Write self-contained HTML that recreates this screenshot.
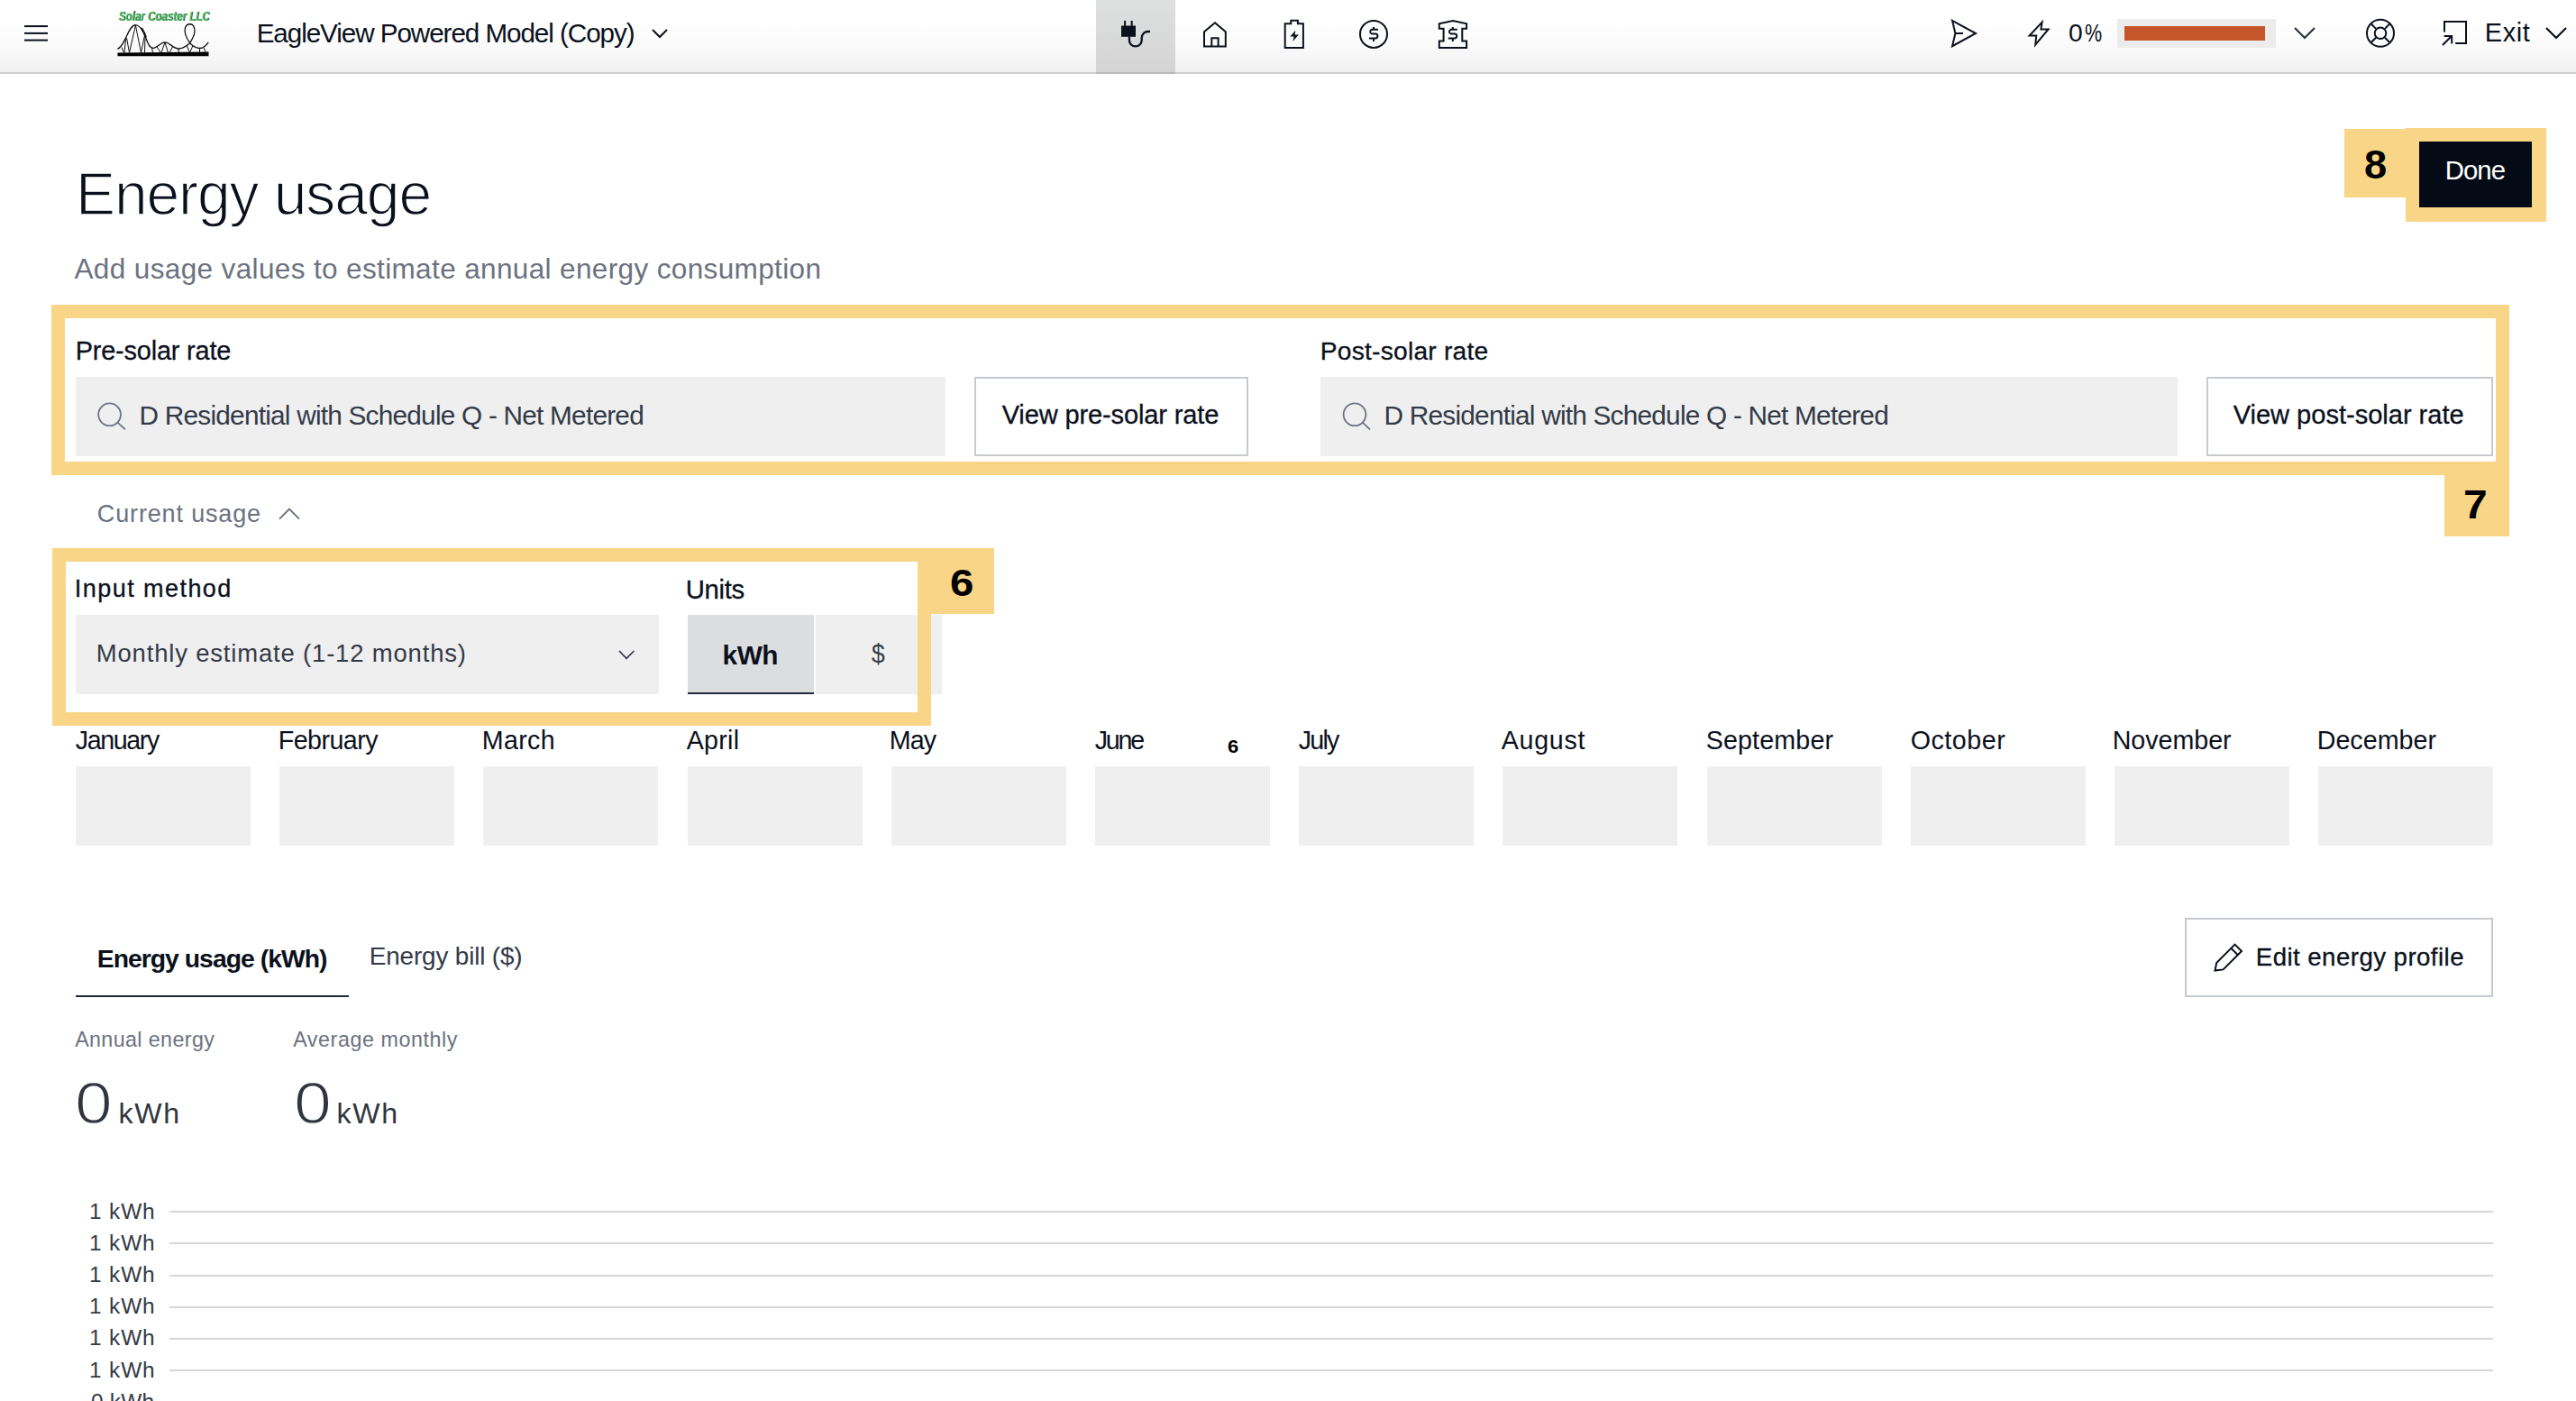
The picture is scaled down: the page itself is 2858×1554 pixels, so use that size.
<!DOCTYPE html><html><head><meta charset="utf-8"><title>Energy usage</title><style>
html,body{margin:0;padding:0;background:#fff;}
body{width:2858px;height:1554px;overflow:hidden;position:relative;font-family:"Liberation Sans",sans-serif;}
.t{position:absolute;white-space:nowrap;line-height:1;}
.m{-webkit-text-stroke:0.3px currentColor;}.lt{-webkit-text-stroke:1.5px #fff;}
</style></head><body>
<div style="position:absolute;left:0;top:0;width:2858px;height:80px;background:linear-gradient(#ffffff 0%,#ffffff 28%,#fafafa 65%,#f1f1f1 100%)"></div>
<div style="position:absolute;left:0;top:80px;width:2858px;height:2px;background:#cecfd1"></div>
<div style="position:absolute;left:1216px;top:0;width:88px;height:80px;background:linear-gradient(#dedfdf,#d4d4d4)"></div>
<div style="position:absolute;left:1216px;top:80px;width:88px;height:2px;background:#b9b9b9"></div>
<div style="position:absolute;left:2349px;top:21px;width:176px;height:32px;background:#ececec"></div>
<div style="position:absolute;left:2357px;top:29px;width:156px;height:16px;background:#c5562b"></div>
<div style="position:absolute;left:57px;top:338px;width:2727px;height:189px;box-sizing:border-box;border:15px solid #f8d587"></div>
<div style="position:absolute;left:84px;top:418px;width:965px;height:88px;background:#efefef"></div>
<div style="position:absolute;left:1081px;top:418px;width:304px;height:88px;box-sizing:border-box;border:2px solid #c6cacf;background:#fff"></div>
<div style="position:absolute;left:1465px;top:418px;width:951px;height:88px;background:#efefef"></div>
<div style="position:absolute;left:2448px;top:418px;width:318px;height:88px;box-sizing:border-box;border:2px solid #c6cacf;background:#fff"></div>
<div style="position:absolute;left:2712px;top:522px;width:72px;height:73px;background:#f8d587"></div>
<div style="position:absolute;left:2669px;top:142px;width:156px;height:104px;background:#f8d587"></div>
<div style="position:absolute;left:2601px;top:143px;width:68px;height:76px;background:#f8d587"></div>
<div style="position:absolute;left:2684px;top:157px;width:125px;height:73px;background:#050b16"></div>
<div style="position:absolute;left:84px;top:682px;width:647px;height:88px;background:#efefef"></div>
<div style="position:absolute;left:763px;top:682px;width:140px;height:88px;background:#dcdddf"></div>
<div style="position:absolute;left:763px;top:768px;width:140px;height:2px;background:#1f2937"></div>
<div style="position:absolute;left:905px;top:682px;width:140px;height:88px;background:#efefef"></div>
<div style="position:absolute;left:58px;top:608px;width:975px;height:197px;box-sizing:border-box;border:15px solid #f8d587"></div>
<div style="position:absolute;left:1033px;top:608px;width:70px;height:73px;background:#f8d587"></div>
<div style="position:absolute;left:84.0px;top:850px;width:194px;height:88px;background:#efefef"></div>
<div style="position:absolute;left:310.2px;top:850px;width:194px;height:88px;background:#efefef"></div>
<div style="position:absolute;left:536.4px;top:850px;width:194px;height:88px;background:#efefef"></div>
<div style="position:absolute;left:762.6px;top:850px;width:194px;height:88px;background:#efefef"></div>
<div style="position:absolute;left:988.8px;top:850px;width:194px;height:88px;background:#efefef"></div>
<div style="position:absolute;left:1215.0px;top:850px;width:194px;height:88px;background:#efefef"></div>
<div style="position:absolute;left:1441.2px;top:850px;width:194px;height:88px;background:#efefef"></div>
<div style="position:absolute;left:1667.4px;top:850px;width:194px;height:88px;background:#efefef"></div>
<div style="position:absolute;left:1893.6px;top:850px;width:194px;height:88px;background:#efefef"></div>
<div style="position:absolute;left:2119.8px;top:850px;width:194px;height:88px;background:#efefef"></div>
<div style="position:absolute;left:2346.0px;top:850px;width:194px;height:88px;background:#efefef"></div>
<div style="position:absolute;left:2572.2px;top:850px;width:194px;height:88px;background:#efefef"></div>
<div style="position:absolute;left:84px;top:1104px;width:303px;height:2px;background:#1f2937"></div>
<div style="position:absolute;left:2424px;top:1018px;width:342px;height:88px;box-sizing:border-box;border:2px solid #c6cacf"></div>
<div style="position:absolute;left:188px;top:1343.0px;width:2578px;height:2px;background:#d5d7da"></div>
<div style="position:absolute;left:188px;top:1378.0px;width:2578px;height:2px;background:#d5d7da"></div>
<div style="position:absolute;left:188px;top:1414.0px;width:2578px;height:2px;background:#d5d7da"></div>
<div style="position:absolute;left:188px;top:1449.0px;width:2578px;height:2px;background:#d5d7da"></div>
<div style="position:absolute;left:188px;top:1484.0px;width:2578px;height:2px;background:#d5d7da"></div>
<div style="position:absolute;left:188px;top:1519.0px;width:2578px;height:2px;background:#d5d7da"></div>
<svg style="position:absolute;left:0;top:0" width="2858" height="1554" viewBox="0 0 2858 1554">
<rect x="27" y="28.1" width="26" height="2" fill="#0b111c"/>
<rect x="27" y="35.9" width="26" height="2" fill="#0b111c"/>
<rect x="27" y="43.6" width="26" height="2" fill="#0b111c"/>
<g>
<text transform="translate(132.20,23.30) scale(0.8,1)" x="0" y="0" font-family="Liberation Sans" font-weight="700" font-style="italic" font-size="14.2" fill="#1d3b22" textLength="126" lengthAdjust="spacing">Solar Coaster LLC</text>
<text transform="translate(131.50,22.60) scale(0.8,1)" x="0" y="0" font-family="Liberation Sans" font-weight="700" font-style="italic" font-size="14.2" fill="#4fbf68" textLength="126" lengthAdjust="spacing">Solar Coaster LLC</text>
<path d="M130.5 58.6 L231.5 57.6 L231.5 62.2 L130.5 62.2 Z" fill="#000"/>
<path d="M130.4 54.4 C135 52.5 137 47 140 41 C143.5 33.5 146.5 27.6 150.4 27.6 C155 27.6 159 35 161.6 41.5 C164 48 166 53.3 170 53.3 C175 53.3 178 46.8 183 46.8 C188 46.8 192 54 198.2 54 C203 54 207 51 210.7 47.7 C206 41 204.5 35 205.4 31 C206.5 27.5 208.5 26.75 210.7 26.75 C213 26.75 216 28.5 216 34.8 C216 39 213 44 210.7 47.7 C213 51 218 53.5 222 53.5 C226 53.5 229 50 231.25 46.8" fill="none" stroke="#111" stroke-width="1.3"/>
<line x1="135" y1="52.5" x2="137.5" y2="58.5" stroke="#111" stroke-width="1"/>
<line x1="139.5" y1="43" x2="138" y2="58.5" stroke="#111" stroke-width="1"/>
<line x1="140.5" y1="42" x2="143.5" y2="58.5" stroke="#111" stroke-width="1"/>
<line x1="150.4" y1="28" x2="143.5" y2="58.5" stroke="#111" stroke-width="1"/>
<line x1="150.4" y1="28" x2="156.5" y2="58.5" stroke="#111" stroke-width="1"/>
<line x1="160.5" y1="39" x2="156.5" y2="58.5" stroke="#111" stroke-width="1"/>
<line x1="161" y1="40" x2="160.5" y2="58.5" stroke="#111" stroke-width="1"/>
<line x1="168.5" y1="53" x2="169.5" y2="58.5" stroke="#111" stroke-width="1"/>
<line x1="174" y1="52" x2="178.5" y2="58.5" stroke="#111" stroke-width="1"/>
<line x1="183" y1="47" x2="179" y2="58.5" stroke="#111" stroke-width="1"/>
<line x1="183" y1="47" x2="186.5" y2="58.5" stroke="#111" stroke-width="1"/>
<line x1="192" y1="51" x2="188" y2="58.5" stroke="#111" stroke-width="1"/>
<line x1="198.2" y1="54" x2="198.2" y2="58.5" stroke="#111" stroke-width="1"/>
<line x1="207" y1="50" x2="210.5" y2="58.5" stroke="#111" stroke-width="1"/>
<line x1="214" y1="50.5" x2="210.5" y2="58.5" stroke="#111" stroke-width="1"/>
<line x1="221.5" y1="53.5" x2="221.5" y2="58.5" stroke="#111" stroke-width="1"/>
<line x1="226" y1="53" x2="228.5" y2="58.5" stroke="#111" stroke-width="1"/>
<path d="M157 31 C159 34 161 38 161.8 41.5" fill="none" stroke="#111" stroke-width="2.2"/>
</g>
<path d="M724 33 L732 41 L740 33" fill="none" stroke="#0b111c" stroke-width="2"/>
<rect x="1244" y="28.5" width="16" height="12.3" fill="#0b111c"/>
<rect x="1247.1" y="23" width="2" height="6" fill="#0b111c"/>
<rect x="1254.6" y="23" width="2.1" height="6" fill="#0b111c"/>
<path d="M1252.9 40.5 V44.6 A6.9 6.9 0 0 0 1266.7 44.6 V42 A7 7 0 0 1 1273.7 35 H1276" fill="none" stroke="#0b111c" stroke-width="2.3"/>
<path d="M1336 51.4 V35.2 L1348 25.2 L1359.8 35.2 V51.4 Z" fill="none" stroke="#0b111c" stroke-width="2"/>
<path d="M1344.3 51.4 V42.2 H1351.6 V51.4" fill="none" stroke="#0b111c" stroke-width="2"/>
<path d="M1425.7 26.2 H1432.3 V22.7 H1439.9 V26.2 H1445.9 V53 H1425.7 Z" fill="none" stroke="#0b111c" stroke-width="2"/>
<path d="M1437.3 33.8 L1431.3 40.6 L1435.6 40.6 L1434.3 45.9 L1440.9 38.4 L1436.6 38.4 Z" fill="#0b111c"/>
<circle cx="1524" cy="37.9" r="15" fill="none" stroke="#0b111c" stroke-width="2"/>
<path d="M1529.0 32.8 H1522.0 A2.5 2.5 0 0 0 1522.0 37.6 H1526.0 A2.4 2.4 0 0 1 1526.0 42.4 H1519.0 M1524.0 30 V32.8 M1524.0 42.4 V45.9" fill="none" stroke="#0b111c" stroke-width="2"/>
<path d="M1596.8 26.3 L1612 23 L1627.1 26.3 V31.8 H1622.3 V45.4 H1627.1 V53 H1596.8 V45.4 H1601.6 V31.8 H1596.8 Z" fill="none" stroke="#0b111c" stroke-width="2"/>
<path d="M1616.8 32.8 H1609.8 A2.5 2.5 0 0 0 1609.8 37.6 H1613.8 A2.4 2.4 0 0 1 1613.8 42.4 H1606.8 M1611.8 30 V32.8 M1611.8 42.4 V45.9" fill="none" stroke="#0b111c" stroke-width="2"/>
<path d="M2166 22.8 L2192 37 L2166 51.2 L2169.4 37 Z M2169.4 37 H2178" fill="none" stroke="#0b111c" stroke-width="2" stroke-linejoin="miter"/>
<path d="M2265.6 24.6 L2251.6 39.6 H2259.2 L2258.2 49.6 L2272.6 32.4 H2264.4 Z" fill="none" stroke="#0b111c" stroke-width="2"/>
<path d="M2546 31 L2557 42 L2568 31" fill="none" stroke="#2d3440" stroke-width="2.2"/>
<path d="M2825 31 L2836 42 L2847 31" fill="none" stroke="#0b111c" stroke-width="2.2"/>
<circle cx="2641" cy="36.8" r="15" fill="none" stroke="#0b111c" stroke-width="2"/>
<circle cx="2641" cy="36.8" r="6.3" fill="none" stroke="#0b111c" stroke-width="2"/>
<line x1="2645.95" y1="41.75" x2="2651.25" y2="47.05" stroke="#0b111c" stroke-width="2"/>
<line x1="2636.05" y1="41.75" x2="2630.75" y2="47.05" stroke="#0b111c" stroke-width="2"/>
<line x1="2636.05" y1="31.85" x2="2630.75" y2="26.55" stroke="#0b111c" stroke-width="2"/>
<line x1="2645.95" y1="31.85" x2="2651.25" y2="26.55" stroke="#0b111c" stroke-width="2"/>
<path d="M2712 35.5 V24 H2736 V48 H2724.2" fill="none" stroke="#0b111c" stroke-width="2"/>
<path d="M2710 50 L2720 40 M2711.7 40 H2720.2 V48.6" fill="none" stroke="#0b111c" stroke-width="2"/>
<circle cx="121.6" cy="459.8" r="12.4" fill="none" stroke="#6b7280" stroke-width="1.8"/>
<line x1="130.4" y1="468.6" x2="139.0" y2="476.3" stroke="#6b7280" stroke-width="1.8"/>
<circle cx="1503.0" cy="459.8" r="12.4" fill="none" stroke="#6b7280" stroke-width="1.8"/>
<line x1="1511.8" y1="468.6" x2="1520.0" y2="476.3" stroke="#6b7280" stroke-width="1.8"/>
<path d="M687 722 L695 730.4 L703.4 722" fill="none" stroke="#2d3440" stroke-width="1.6"/>
<path d="M310 575.6 L321 564.6 L332 575.6" fill="none" stroke="#6b7280" stroke-width="2"/>
<path d="M2457.5 1076.5 L2459.2 1068 L2479.5 1047.6 L2487 1055 L2466.6 1075.4 Z M2475.3 1051.8 L2482.8 1059.2" fill="none" stroke="#0b111c" stroke-width="2" stroke-linejoin="miter"/>
</svg>
<div id="hdr_title" class="t" style="left:284.63px;top:21.50px;font-size:29.65px;font-weight:400;color:#0b111c;letter-spacing:-1.066px">EagleView Powered Model (Copy)</div>
<div id="hdr_0" class="t" style="left:2294.72px;top:22.24px;font-size:28.53px;font-weight:400;color:#0b111c;letter-spacing:0.000px;transform:scaleX(0.988);transform-origin:0 0">0</div>
<div id="hdr_pctsign" class="t" style="left:2312.93px;top:21.90px;font-size:28.34px;font-weight:400;color:#0b111c;letter-spacing:0.000px;transform:scaleX(0.760);transform-origin:0 0">%</div>
<div id="hdr_exit" class="t" style="left:2756.69px;top:21.61px;font-size:28.92px;font-weight:400;color:#0b111c;letter-spacing:0.667px">Exit</div>
<div id="title" class="t lt" style="left:84.02px;top:182.13px;font-size:65.99px;font-weight:400;color:#0b111c;letter-spacing:-1.100px">Energy usage</div>
<div id="subtitle" class="t" style="left:82.48px;top:282.50px;font-size:31.54px;font-weight:400;color:#6b7280;letter-spacing:0.353px">Add usage values to estimate annual energy consumption</div>
<div id="pre_lbl" class="t m" style="left:83.69px;top:374.81px;font-size:28.92px;font-weight:400;color:#0b111c;letter-spacing:-0.192px">Pre-solar rate</div>
<div id="pre_val" class="t" style="left:154.62px;top:446.27px;font-size:29.80px;font-weight:400;color:#333a47;letter-spacing:-0.781px">D Residential with Schedule Q - Net Metered</div>
<div id="pre_btn" class="t m" style="left:1111.67px;top:446.29px;font-size:29.07px;font-weight:400;color:#0b111c;letter-spacing:-0.150px">View pre-solar rate</div>
<div id="post_lbl" class="t m" style="left:1464.74px;top:374.92px;font-size:28.20px;font-weight:400;color:#0b111c;letter-spacing:0.229px">Post-solar rate</div>
<div id="post_val" class="t" style="left:1535.62px;top:446.27px;font-size:29.80px;font-weight:400;color:#333a47;letter-spacing:-0.781px">D Residential with Schedule Q - Net Metered</div>
<div id="post_btn" class="t m" style="left:2477.67px;top:446.29px;font-size:29.07px;font-weight:400;color:#0b111c;letter-spacing:-0.016px">View post-solar rate</div>
<div id="badge7" class="t" style="left:2733.40px;top:537.05px;font-size:45.06px;font-weight:700;color:#000000;letter-spacing:0.000px;transform:scaleX(1.064);transform-origin:0 0">7</div>
<div id="badge8" class="t" style="left:2623.47px;top:160.89px;font-size:44.07px;font-weight:700;color:#000000;letter-spacing:0.000px;transform:scaleX(1.027);transform-origin:0 0">8</div>
<div id="done" class="t" style="left:2712.65px;top:174.44px;font-size:29.36px;font-weight:400;color:#ffffff;letter-spacing:-0.900px">Done</div>
<div id="cur_usage" class="t" style="left:107.84px;top:557.01px;font-size:27.03px;font-weight:400;color:#6b7280;letter-spacing:0.842px">Current usage</div>
<div id="in_lbl" class="t m" style="left:82.84px;top:639.51px;font-size:27.03px;font-weight:400;color:#0b111c;letter-spacing:1.436px">Input method</div>
<div id="in_val" class="t" style="left:106.80px;top:710.94px;font-size:27.47px;font-weight:400;color:#333a47;letter-spacing:0.824px">Monthly estimate (1-12 months)</div>
<div id="units_lbl" class="t m" style="left:760.65px;top:638.54px;font-size:29.36px;font-weight:400;color:#0b111c;letter-spacing:-0.325px">Units</div>
<div id="kwh_seg" class="t" style="left:801.62px;top:712.27px;font-size:29.80px;font-weight:700;color:#0b111c;letter-spacing:-0.550px">kWh</div>
<div id="usd_seg" class="t" style="left:966.59px;top:709.80px;font-size:30.12px;font-weight:400;color:#333a47;letter-spacing:0.000px;transform:scaleX(0.879);transform-origin:0 0">$</div>
<div id="badge6" class="t" style="left:1053.59px;top:625.38px;font-size:42.66px;font-weight:700;color:#000000;letter-spacing:0.000px;transform:scaleX(1.110);transform-origin:0 0">6</div>
<div id="mini6" class="t" style="left:1362.44px;top:818.50px;font-size:19.49px;font-weight:700;color:#000000;letter-spacing:0.000px;transform:scaleX(1.124);transform-origin:0 0">6</div>
<div id="tab1" class="t" style="left:107.73px;top:1048.80px;font-size:28.34px;font-weight:700;color:#0b111c;letter-spacing:-0.976px">Energy usage (kWh)</div>
<div id="tab2" class="t" style="left:409.77px;top:1047.07px;font-size:27.91px;font-weight:400;color:#333a47;letter-spacing:-0.164px">Energy bill ($)</div>
<div id="edit" class="t m" style="left:2502.79px;top:1047.61px;font-size:27.62px;font-weight:400;color:#0b111c;letter-spacing:0.456px">Edit energy profile</div>
<div id="annual" class="t" style="left:83.14px;top:1142.31px;font-size:23.26px;font-weight:400;color:#6b7280;letter-spacing:0.400px">Annual energy</div>
<div id="avg" class="t" style="left:325.14px;top:1142.31px;font-size:23.26px;font-weight:400;color:#6b7280;letter-spacing:0.593px">Average monthly</div>
<div id="zero1" class="t lt" style="left:82.84px;top:1192.05px;font-size:64.55px;font-weight:400;color:#30363f;letter-spacing:0.000px;transform:scaleX(1.161);transform-origin:0 0">0</div>
<div id="kwh1" class="t" style="left:131.43px;top:1218.80px;font-size:32.12px;font-weight:400;color:#30363f;letter-spacing:1.750px">kWh</div>
<div id="zero2" class="t lt" style="left:325.84px;top:1192.05px;font-size:64.55px;font-weight:400;color:#30363f;letter-spacing:0.000px;transform:scaleX(1.166);transform-origin:0 0">0</div>
<div id="kwh2" class="t" style="left:373.43px;top:1218.80px;font-size:32.12px;font-weight:400;color:#30363f;letter-spacing:1.700px">kWh</div>
<div id="m0" class="t" style="left:83.71px;top:806.86px;font-size:28.63px;font-weight:400;color:#0b111c;letter-spacing:-1.367px">January</div>
<div id="m1" class="t" style="left:308.71px;top:806.86px;font-size:28.63px;font-weight:400;color:#0b111c;letter-spacing:-0.529px">February</div>
<div id="m2" class="t" style="left:534.71px;top:806.86px;font-size:28.63px;font-weight:400;color:#0b111c;letter-spacing:0.350px">March</div>
<div id="m3" class="t" style="left:761.71px;top:806.86px;font-size:28.63px;font-weight:400;color:#0b111c;letter-spacing:0.275px">April</div>
<div id="m4" class="t" style="left:986.71px;top:806.86px;font-size:28.63px;font-weight:400;color:#0b111c;letter-spacing:-0.850px">May</div>
<div id="m5" class="t" style="left:1214.71px;top:806.86px;font-size:28.63px;font-weight:400;color:#0b111c;letter-spacing:-2.233px">June</div>
<div id="m6" class="t" style="left:1440.71px;top:806.86px;font-size:28.63px;font-weight:400;color:#0b111c;letter-spacing:-1.733px">July</div>
<div id="m7" class="t" style="left:1665.71px;top:806.86px;font-size:28.63px;font-weight:400;color:#0b111c;letter-spacing:0.720px">August</div>
<div id="m8" class="t" style="left:1892.71px;top:806.86px;font-size:28.63px;font-weight:400;color:#0b111c;letter-spacing:0.163px">September</div>
<div id="m9" class="t" style="left:2119.71px;top:806.86px;font-size:28.63px;font-weight:400;color:#0b111c;letter-spacing:0.533px">October</div>
<div id="m10" class="t" style="left:2343.71px;top:806.86px;font-size:28.63px;font-weight:400;color:#0b111c;letter-spacing:-0.014px">November</div>
<div id="m11" class="t" style="left:2570.71px;top:806.86px;font-size:28.63px;font-weight:400;color:#0b111c;letter-spacing:0.029px">December</div>
<div id="y0" class="t" style="left:99.05px;top:1331.52px;font-size:24.42px;font-weight:400;color:#333a47;letter-spacing:0.850px">1 kWh</div>
<div id="y1" class="t" style="left:99.05px;top:1366.72px;font-size:24.42px;font-weight:400;color:#333a47;letter-spacing:0.850px">1 kWh</div>
<div id="y2" class="t" style="left:99.05px;top:1401.92px;font-size:24.42px;font-weight:400;color:#333a47;letter-spacing:0.850px">1 kWh</div>
<div id="y3" class="t" style="left:99.05px;top:1437.12px;font-size:24.42px;font-weight:400;color:#333a47;letter-spacing:0.850px">1 kWh</div>
<div id="y4" class="t" style="left:99.05px;top:1472.32px;font-size:24.42px;font-weight:400;color:#333a47;letter-spacing:0.850px">1 kWh</div>
<div id="y5" class="t" style="left:99.05px;top:1507.52px;font-size:24.42px;font-weight:400;color:#333a47;letter-spacing:0.850px">1 kWh</div>
<div id="y6" class="t" style="left:101.05px;top:1542.72px;font-size:24.42px;font-weight:400;color:#333a47;letter-spacing:0.200px">0 kWh</div>
</body></html>
